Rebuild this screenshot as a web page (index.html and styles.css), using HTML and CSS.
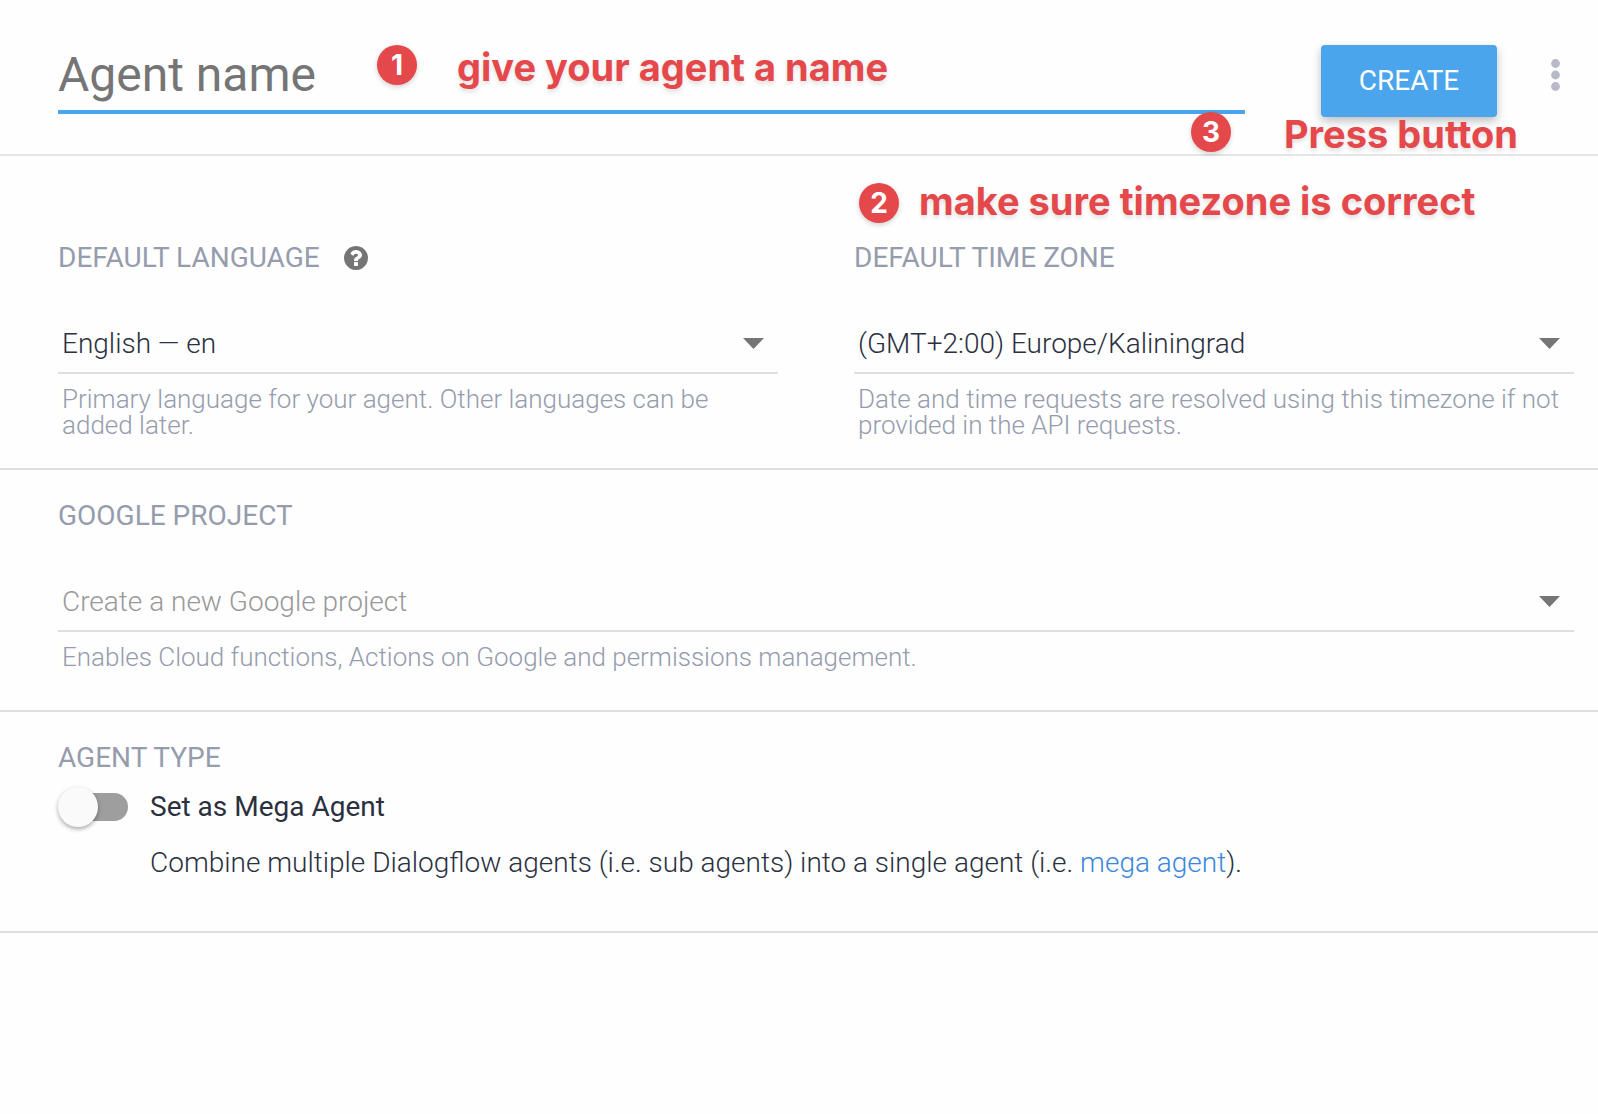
FILE: index.html
```html
<!DOCTYPE html>
<html lang="en">
<head>
<meta charset="utf-8">
<meta name="viewport" content="width=device-width, initial-scale=1">
<title>New agent</title>
<link rel="stylesheet" href="styles.css">
</head>
<body>
<form class="agent-form">
  <header class="header">
    <div class="name-field">
      <input class="name-input" type="text" placeholder="Agent name" aria-label="Agent name">
      <div class="note note-name"><span class="badge">1</span><span>give your agent a name</span></div>
    </div>
    <div class="actions">
      <button class="create" type="button">CREATE</button>
      <button class="menu" type="button" aria-label="More options">
        <svg width="9" height="32" viewBox="0 0 9 32" fill="#b7bac6" aria-hidden="true"><circle cx="4.5" cy="4.5" r="4.4"/><circle cx="4.5" cy="16" r="4.4"/><circle cx="4.5" cy="27.5" r="4.4"/></svg>
      </button>
      <div class="note note-create"><span class="badge">3</span><span>Press button</span></div>
    </div>
  </header>

  <section class="section locale">
    <div class="field">
      <div class="label-row">
        <label class="label" for="language">DEFAULT LANGUAGE</label>
        <svg width="24" height="24" viewBox="128 128 1536 1536" fill="#757575" aria-hidden="true"><path d="M1024 1376v-192q0-14-9-23t-23-9h-192q-14 0-23 9t-9 23v192q0 14 9 23t23 9h192q14 0 23-9t9-23zm256-672q0-88-55.500-163t-138.500-116-170-41q-243 0-371 213-15 24 8 42l132 100q7 6 19 6 16 0 25-12 53-68 86-92 34-24 86-24 48 0 85.500 26t37.500 59q0 38-20 61t-68 45q-63 28-115.500 86.500t-52.500 125.500v36q0 14 9 23t23 9h192q14 0 23-9t9-23q0-19 21.500-49.500t54.500-49.500q32-18 49-28.500t46-35 44.500-48 28-60.500 12.500-81zm384 192q0 209-103 385.500t-279.500 279.500-385.500 103-385.500-103-279.500-279.500-103-385.500 103-385.500 279.500-279.500 385.500-103 385.500 103 279.500 279.500 103 385.500z"/></svg>
      </div>
      <div class="select-box">
        <select class="select" id="language"><option>English — en</option></select>
        <svg class="arrow" width="21" height="11" viewBox="0 0 21 11" aria-hidden="true"><path d="M0 0h21L10.500 11z" fill="#757575"/></svg>
      </div>
      <p class="help">Primary language for your agent. Other languages can be added later.</p>
    </div>
    <div class="field">
      <div class="note note-zone"><span class="badge">2</span><span>make sure timezone is correct</span></div>
      <div class="label-row"><label class="label" for="zone">DEFAULT TIME ZONE</label></div>
      <div class="select-box">
        <select class="select" id="zone"><option>(GMT+2:00) Europe/Kaliningrad</option></select>
        <svg class="arrow" width="21" height="11" viewBox="0 0 21 11" aria-hidden="true"><path d="M0 0h21L10.500 11z" fill="#757575"/></svg>
      </div>
      <p class="help">Date and time requests are resolved using this timezone if not provided in the API requests.</p>
    </div>
  </section>

  <section class="section project">
    <div class="field">
      <div class="label-row"><label class="label" for="project">GOOGLE PROJECT</label></div>
      <div class="select-box">
        <select class="select select-empty" id="project"><option>Create a new Google project</option></select>
        <svg class="arrow" width="21" height="11" viewBox="0 0 21 11" aria-hidden="true"><path d="M0 0h21L10.500 11z" fill="#757575"/></svg>
      </div>
      <p class="help">Enables Cloud functions, Actions on Google and permissions management.</p>
    </div>
  </section>

  <section class="section type">
    <h2 class="label">AGENT TYPE</h2>
    <div class="toggle-row">
      <input class="toggle" type="checkbox" role="switch" id="mega">
      <label for="mega">Set as Mega Agent</label>
    </div>
    <p class="description">Combine multiple Dialogflow agents (i.e. sub agents) into a single agent (i.e. <a href="#mega">mega agent</a>).</p>
  </section>
</form>
</body>
</html>
```
FILE: styles.css
```css
* { box-sizing: border-box; }

body {
  margin: 0;
  background: #fefefe;
  color: #2b303f;
  font: 400 28px/32px Roboto, sans-serif;
}

h2, p { margin: 0; }

/* Header */
.header {
  display: flex;
  align-items: flex-start;
  gap: 76px;
  padding: 38px 24px 40px 58px;
  border-bottom: 2px solid #e5e5e5;
}

.name-field { position: relative; flex: 1; min-width: 0; }

.name-input {
  display: block;
  width: 100%;
  height: 76px;
  padding: 0;
  border: 0;
  border-bottom: 4px solid #4ba5ed;
  outline: 0;
  background: none;
  color: #2b303f;
  font: 400 48px/72px Roboto, sans-serif;
}
.name-input::placeholder { color: #757575; opacity: 1; }

.actions {
  position: relative;
  display: flex;
  align-items: flex-start;
  gap: 40px;
  height: 76px;
  padding-top: 7px;
}

.create {
  width: 176px;
  height: 72px;
  flex: none;
  padding: 0;
  border: 0;
  border-radius: 4px;
  background: #4ba5ed;
  box-shadow: 0 4px 10px rgba(0, 0, 0, 0.26);
  color: #fff;
  font: 400 28px/32px Roboto, sans-serif;
}

.menu {
  display: flex;
  align-items: center;
  justify-content: center;
  width: 37px;
  height: 60px;
  padding: 0;
  border: 0;
  background: none;
}

/* Red tutorial notes laid over the form */
.note {
  position: absolute;
  display: flex;
  align-items: flex-start;
  color: #e5484b;
  font: 700 38px/44px Inter, sans-serif;
  white-space: nowrap;
  text-shadow: 0 3px 4px rgba(0, 0, 0, 0.12);
  pointer-events: none;
}
.note-name { top: 7px; left: 319px; gap: 40px; }
.note-create { top: 74px; right: 56px; gap: 53px; }
.note-zone { top: -63px; left: 5px; align-items: flex-end; gap: 20px; }

.badge {
  flex: none;
  width: 40px;
  height: 40px;
  border-radius: 50%;
  background: #e5484b;
  box-shadow: 0 2px 5px rgba(0, 0, 0, 0.18);
  color: #fff;
  font-size: 28px;
  font-weight: 700;
  line-height: 40px;
  text-align: center;
  text-shadow: none;
}

/* Sections */
.section {
  padding: 30px 24px 30px 58px;
  border-bottom: 2px solid #dfdfdf;
}
.locale {
  display: grid;
  grid-template-columns: 1fr 1fr;
  gap: 76px;
  padding-top: 86px;
}
.project { padding-bottom: 40px; }
.type { padding-bottom: 52px; }

.field { position: relative; min-width: 0; }

.label-row { display: flex; align-items: center; gap: 24px; }

.label {
  color: #959cad;
  font-size: 28px;
  font-weight: 400;
  line-height: 32px;
}

.select-box { display: grid; align-items: center; margin: 42px 0 12px; }

.select {
  grid-area: 1 / 1;
  width: 100%;
  height: 58px;
  padding: 0 48px 0 4px;
  border: 0;
  border-bottom: 2px solid #dfdfdf;
  border-radius: 0;
  outline: 0;
  appearance: none;
  background: none;
  color: #2b303f;
  font: 300 28px/32px Roboto, sans-serif;
}
.select-empty { color: #999; }

.arrow {
  grid-area: 1 / 1;
  justify-self: end;
  margin: 0 14px 4px 0;
  pointer-events: none;
}

.help {
  padding: 0 4px;
  color: #959cad;
  font-size: 26px;
  font-weight: 300;
  line-height: 26px;
}

/* Agent type */
.toggle-row {
  display: flex;
  align-items: center;
  gap: 22px;
  margin: 13px 0 20px;
}

.toggle {
  position: relative;
  flex: none;
  width: 70px;
  height: 40px;
  margin: 0;
  appearance: none;
}
.toggle::before {
  content: "";
  position: absolute;
  inset: 6px 0 6px 2px;
  border-radius: 14px;
  background: #9e9e9e;
}
.toggle::after {
  content: "";
  position: absolute;
  top: 0;
  left: 0;
  width: 40px;
  height: 40px;
  border-radius: 50%;
  background: #fafafa;
  box-shadow: 0 2px 4px rgba(0, 0, 0, 0.34);
}
.toggle:checked::after { left: 30px; }

.description { padding-left: 92px; font-weight: 300; }
.description a { color: #3c87dd; text-decoration: none; }
```
